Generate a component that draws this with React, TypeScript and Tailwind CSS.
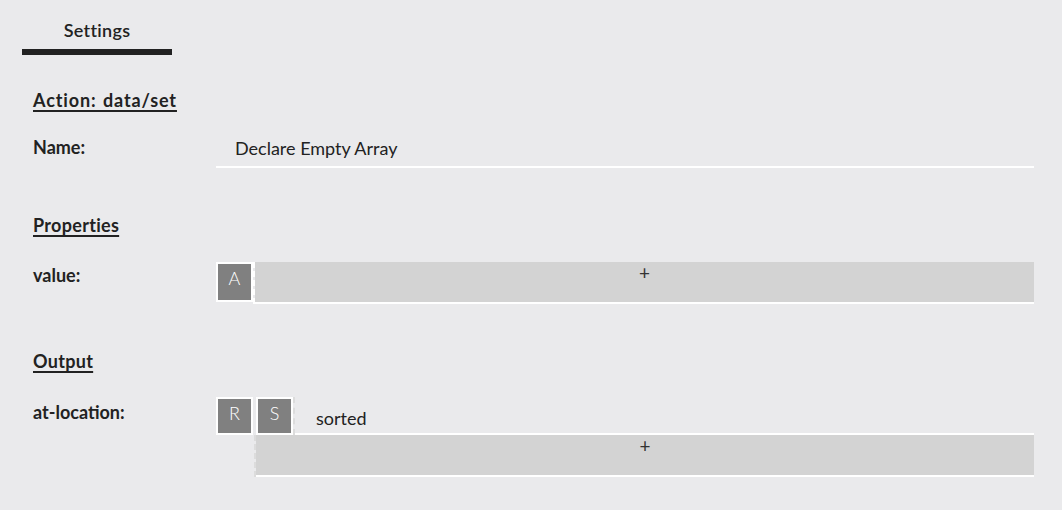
import React from 'react'

const FONT = { fontFamily: 'Lato, "Noto Sans", "Liberation Sans", sans-serif' }

const Tile = ({ letter, tall }: { letter: string; tall?: boolean }) => (
  <div
    className={`w-[37px] ${tall ? 'h-[40px]' : 'h-[38px]'} border-2 border-white bg-[#808080] flex items-start justify-center pt-[5px] text-[18px] text-white font-light leading-none`}
  >
    {letter}
  </div>
)

const AddField = () => (
  <div className="flex-1 h-[42px] bg-[#d3d3d3] border-b-2 border-white flex justify-center pt-[1px] text-[19px] text-[#333] leading-none">
    +
  </div>
)

const App = () => {
  return (
    <div className="w-full h-[510px] bg-[#eaeaec] text-[#222] overflow-hidden" style={FONT}>
      {/* tab bar */}
      <div className="pl-[22px] pt-[18px]">
        <div className="w-[150px]">
          <div className="text-center text-[18px] font-semibold leading-[24px] tracking-[0.3px]">Settings</div>
          <div className="mt-[7px] h-[6px] bg-[#222]" />
        </div>
      </div>

      <div className="pl-[33px] pr-[28px]">
        {/* action */}
        <div className="mt-[33px] text-[18px] font-bold underline decoration-2 underline-offset-[3px] leading-[24px] tracking-[0.9px] [word-spacing:1px]">
          Action: data/set
        </div>

        <div className="mt-[21px] flex">
          <div className="w-[183px] pt-[2px] text-[18px] font-bold leading-[24px]">Name:</div>
          <div className="flex-1 border-b-2 border-white pl-[19px] pt-[3px] pb-[6px] text-[18px] leading-[24px]">
            Declare Empty Array
          </div>
        </div>

        {/* properties */}
        <div className="mt-[45px] text-[18px] font-bold underline decoration-2 underline-offset-[3px] leading-[24px] tracking-[0.3px]">
          Properties
        </div>

        <div className="mt-[25px] flex">
          <div className="w-[183px] pt-[1px] text-[18px] font-bold leading-[24px]">value:</div>
          <div className="flex-1 flex">
            <Tile letter="A" tall />
            <div className="flex-1 flex border-l-2 border-dashed border-l-white">
              <AddField />
            </div>
          </div>
        </div>

        {/* output */}
        <div className="mt-[45px] text-[18px] font-bold underline decoration-2 underline-offset-[3px] leading-[24px] tracking-[0.3px]">
          Output
        </div>

        <div className="mt-[24px] flex">
          <div className="w-[183px] pt-[3px] text-[18px] font-bold leading-[24px]">at-location:</div>
          <div className="flex-1 flex flex-col">
            <div className="flex">
              <Tile letter="R" />
              <div className="ml-[3px] flex border-r-2 border-dashed border-r-[#dcdcdc]">
                <Tile letter="S" />
              </div>
              <div className="flex-1 border-b-2 border-white pl-[21px] pt-[9px] text-[18px] leading-[24px]">
                sorted
              </div>
            </div>
            <div className="ml-[38px] flex border-l-2 border-dashed border-l-[#dcdcdc]">
              <AddField />
            </div>
          </div>
        </div>
      </div>
    </div>
  )
}

export default App
